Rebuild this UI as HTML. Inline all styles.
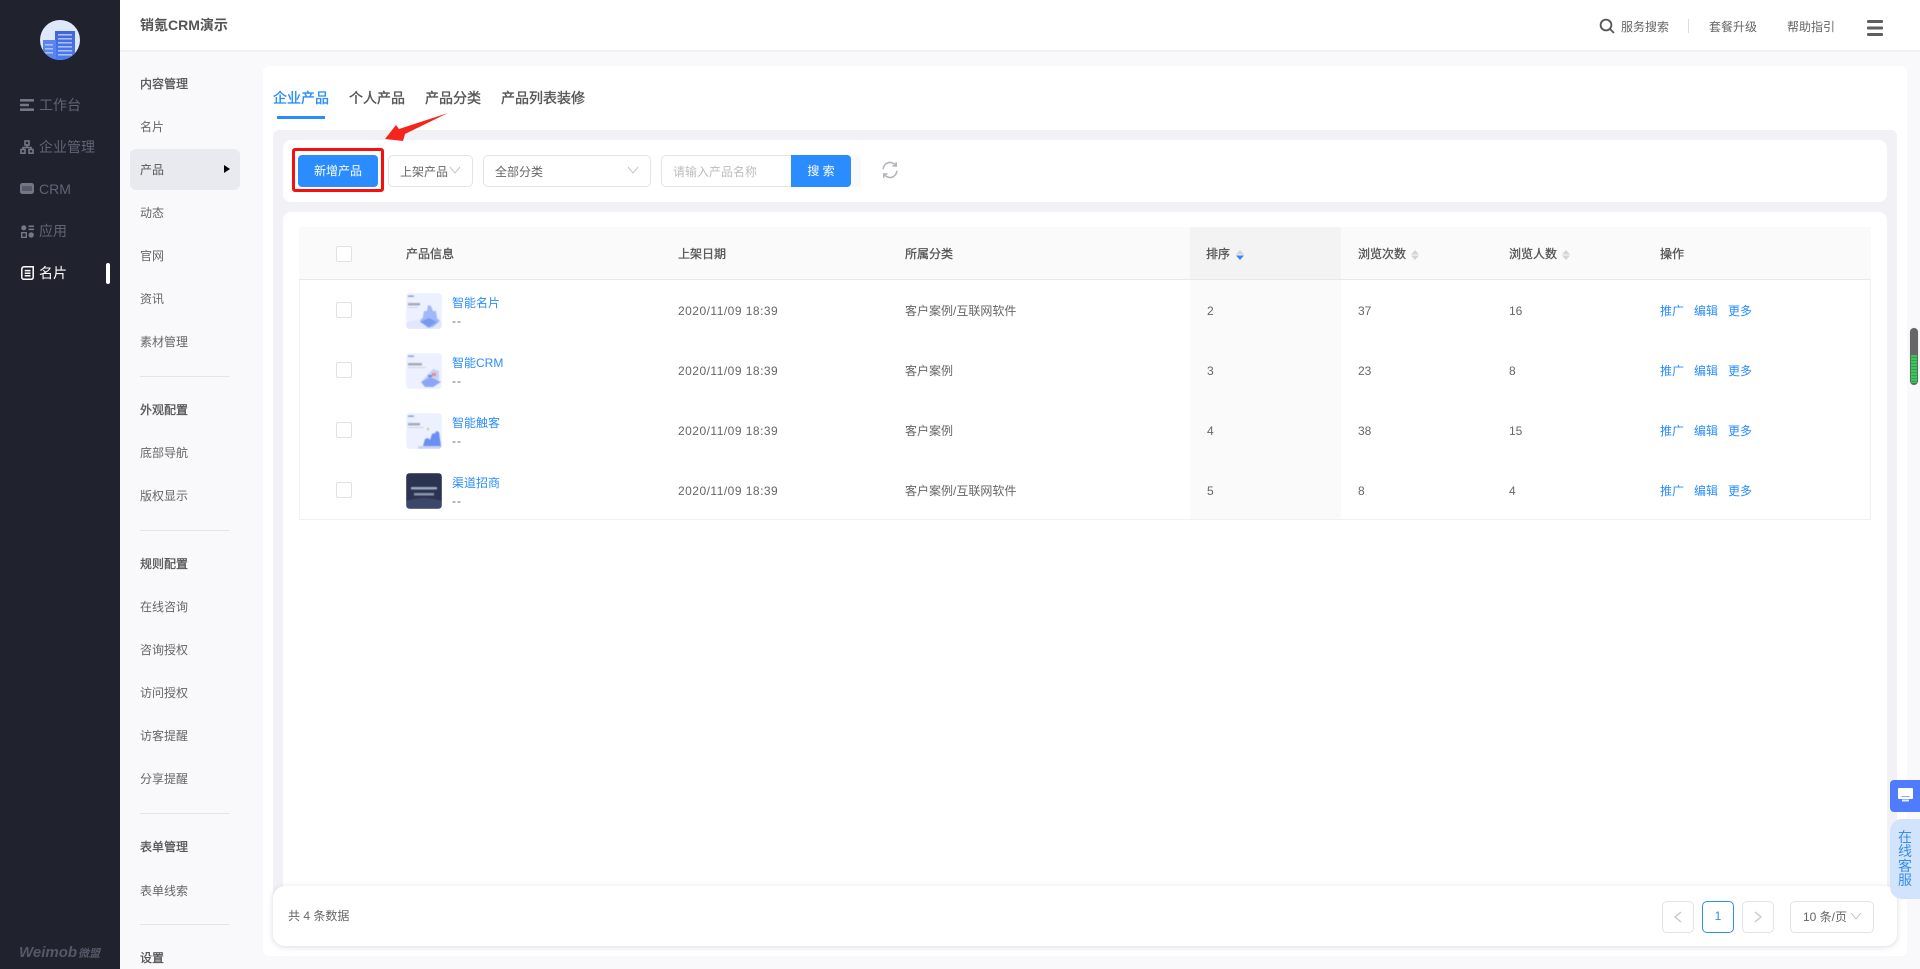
<!DOCTYPE html>
<html lang="zh"><head><meta charset="utf-8"><title>销氪CRM演示</title>
<style>
html,body{margin:0;padding:0}
body{width:1920px;height:969px;overflow:hidden;position:relative;background:#f9f9fb;font-family:"Liberation Sans","Noto Sans CJK SC",sans-serif;font-size:12px;color:#666}
.a{position:absolute;box-sizing:border-box}
.t{position:absolute;white-space:nowrap;line-height:16px}
.s{color:#626476;font-size:14px;left:39px}
.m{left:140px;color:#666;margin-top:1px}
.h{left:140px;color:#555;-webkit-text-stroke:.3px #555;margin-top:1px}
.dv{position:absolute;left:140px;width:90px;height:1px;background:#e4e4e8}
.th{color:#555;-webkit-text-stroke:.3px #555}
.tab{font-size:14px;color:#555;-webkit-text-stroke:.35px #555;top:90px}
.sel{position:absolute;box-sizing:border-box;border:1px solid #e3e3e3;border-radius:5px;background:#fff;height:32px;top:155px}
.cb{position:absolute;box-sizing:border-box;left:336px;width:16px;height:16px;border:1px solid #e2e2e2;border-radius:2px;background:#fff}
.l{color:#2a8cff}
.d{letter-spacing:.48px}
.r{margin-top:1px}
.dd{letter-spacing:1px}
.thumb{filter:blur(.5px)}
</style></head><body>

<!-- sidebar -->
<div class="a" style="left:0;top:0;width:120px;height:969px;background:#20222e"></div>
<svg class="a" style="left:40px;top:20px" width="40" height="40" viewBox="0 0 40 40">
<defs><clipPath id="c"><circle cx="20" cy="20" r="20"/></clipPath><linearGradient id="g" x1="0" y1="0" x2="0" y2="1"><stop offset="0" stop-color="#3f66d8"/><stop offset="1" stop-color="#4c7cf4"/></linearGradient></defs>
<g clip-path="url(#c)"><rect width="40" height="40" fill="#dfe7fb"/>
<rect x="15" y="11" width="20" height="30" fill="url(#g)"/><rect x="3" y="20" width="13" height="21" fill="#5b85ee"/>
<g fill="#a9bff5"><rect x="18" y="14" width="14" height="1.6"/><rect x="18" y="18" width="14" height="1.6"/><rect x="18" y="22" width="14" height="1.6"/><rect x="18" y="26" width="14" height="1.6"/><rect x="18" y="30" width="14" height="1.6"/><rect x="18" y="34" width="14" height="1.6"/><rect x="5" y="24" width="8" height="1.6"/><rect x="5" y="28" width="8" height="1.6"/><rect x="5" y="32" width="8" height="1.6"/></g></g></svg>

<svg class="a" style="left:20px;top:99px" width="14" height="12" fill="#757786"><rect width="14" height="2.6" rx=".6"/><rect y="4.7" width="9" height="2.6" rx=".6"/><rect y="9.4" width="14" height="2.6" rx=".6"/></svg>
<span class="t s" style="top:97px">工作台</span>
<svg class="a" style="left:20px;top:140px" width="14" height="14" fill="none" stroke="#757786" stroke-width="1.6"><rect x="5" y="1" width="4" height="4"/><rect x="1" y="9.5" width="4" height="3.7"/><rect x="9" y="9.5" width="4" height="3.7"/><path d="M7 5v2.5M3 9.5V7.5h8v2"/></svg>
<span class="t s" style="top:139px">企业管理</span>
<svg class="a" style="left:20px;top:183px" width="14" height="11"><rect width="14" height="11" rx="2.5" fill="#757786"/><rect x="2" y="3" width="10" height="5" fill="#585a69"/></svg>
<span class="t s" style="top:181px">CRM</span>
<svg class="a" style="left:21px;top:225px" width="13" height="13" fill="#757786"><circle cx="2.8" cy="2.8" r="2.6"/><rect x="7.5" y=".5" width="5.5" height="1.6"/><rect x="7.5" y="3.6" width="5.5" height="1.6"/><rect x=".7" y="7.7" width="4.6" height="4.6" fill="none" stroke="#757786" stroke-width="1.4"/><circle cx="10.2" cy="10" r="2.7"/></svg>
<span class="t s" style="top:223px">应用</span>
<svg class="a" style="left:21px;top:266px" width="13" height="14" fill="none" stroke="#fff" stroke-width="1.5"><path d="M3 .8h9.2v10.5a2 2 0 0 1-2 2H2.8a2 2 0 0 1-2-2V3a2.2 2.2 0 0 1 2.2-2.2z"/><path d="M3.7 4.6h5.8M3.7 7.2h5.8M3.7 9.8h5.8"/></svg>
<span class="t s" style="top:265px;color:#fff">名片</span>
<div class="a" style="left:106px;top:263px;width:4px;height:21px;background:#fff;border-radius:2px"></div>
<span class="t" style="left:19px;top:945px;font-size:15px;font-weight:700;font-style:italic;color:#565868">Weimob</span>
<span class="t" style="left:78px;top:946px;font-size:11px;font-weight:700;font-style:italic;color:#565868">微盟</span>

<!-- header -->
<div class="a" style="left:120px;top:0;width:1800px;height:50px;background:#fff;box-shadow:0 2px 0 #f1f1f4"></div>
<span class="t" style="left:140px;top:17px;font-size:14px;font-weight:700;color:#555">销氪CRM演示</span>
<svg class="a" style="left:1599px;top:18px" width="16" height="16" fill="none" stroke="#555" stroke-width="1.8"><circle cx="7" cy="7" r="5.4"/><path d="M11 11l4 4"/></svg>
<span class="t r" style="left:1621px;top:18px">服务搜索</span>
<div class="a" style="left:1688px;top:19px;width:1px;height:14px;background:#ddd"></div>
<span class="t r" style="left:1709px;top:18px">套餐升级</span>
<span class="t r" style="left:1787px;top:18px">帮助指引</span>
<svg class="a" style="left:1867px;top:20px" width="16" height="16" fill="#5f5f5f"><rect width="16" height="3" rx="1"/><rect y="6.5" width="16" height="3" rx="1"/><rect y="13" width="16" height="3" rx="1"/></svg>

<!-- secondary menu -->
<span class="t h" style="top:75px">内容管理</span>
<span class="t m" style="top:118px">名片</span>
<div class="a" style="left:130px;top:149px;width:110px;height:41px;background:#e9eaef;border-radius:6px"></div>
<span class="t m" style="top:161px;color:#555">产品</span>
<div class="a" style="left:224px;top:165px;width:0;height:0;border-left:6px solid #000;border-top:4px solid transparent;border-bottom:4px solid transparent"></div>
<span class="t m" style="top:204px">动态</span>
<span class="t m" style="top:247px">官网</span>
<span class="t m" style="top:290px">资讯</span>
<span class="t m" style="top:333px">素材管理</span>
<div class="dv" style="top:376px"></div>
<span class="t h" style="top:401px">外观配置</span>
<span class="t m" style="top:444px">底部导航</span>
<span class="t m" style="top:487px">版权显示</span>
<div class="dv" style="top:530px"></div>
<span class="t h" style="top:555px">规则配置</span>
<span class="t m" style="top:598px">在线咨询</span>
<span class="t m" style="top:641px">咨询授权</span>
<span class="t m" style="top:684px">访问授权</span>
<span class="t m" style="top:727px">访客提醒</span>
<span class="t m" style="top:770px">分享提醒</span>
<div class="dv" style="top:813px"></div>
<span class="t h" style="top:838px">表单管理</span>
<span class="t m" style="top:882px">表单线索</span>
<div class="dv" style="top:924px"></div>
<span class="t h" style="top:949px">设置</span>

<!-- content card -->
<div class="a" style="left:263px;top:66px;width:1644px;height:890px;background:#fff;border-radius:6px"></div>
<span class="t tab" style="left:273px;color:#2a8cff;-webkit-text-stroke:.35px #2a8cff">企业产品</span>
<span class="t tab" style="left:349px">个人产品</span>
<span class="t tab" style="left:425px">产品分类</span>
<span class="t tab" style="left:501px">产品列表装修</span>
<div class="a" style="left:277px;top:116px;width:48px;height:3px;background:#2a8cff"></div>

<div class="a" style="left:273px;top:130px;width:1624px;height:790px;background:#f1f1f6;border-radius:6px"></div>
<div class="a" style="left:283px;top:140px;width:1604px;height:62px;background:#fff;border-radius:8px"></div>
<div class="a" style="left:283px;top:212px;width:1604px;height:700px;background:#fff;border-radius:8px 8px 0 0"></div>

<!-- filter -->
<div class="a" style="left:292px;top:148px;width:92px;height:44px;border:3px solid #f60f0f;border-radius:3px"></div>
<div class="a" style="left:298px;top:155px;width:80px;height:32px;background:#2a8cff;border-radius:4px;color:#fff;text-align:center;line-height:33px">新增产品</div>
<div class="sel" style="left:388px;width:85px"></div>
<span class="t r" style="left:400px;top:163px;color:#666">上架产品</span>
<svg class="a" style="left:449px;top:166px" width="12" height="8" fill="none" stroke="#c4c4c4"><path d="M1 1l5 6 5-6"/></svg>
<div class="sel" style="left:483px;width:168px"></div>
<span class="t r" style="left:495px;top:163px;color:#666">全部分类</span>
<svg class="a" style="left:627px;top:166px" width="12" height="8" fill="none" stroke="#c4c4c4"><path d="M1 1l5 6 5-6"/></svg>
<div class="a" style="left:851px;top:155px;width:10px;height:32px;background:#f9f9f9;border-radius:0 5px 5px 0"></div>
<div class="sel" style="left:661px;width:132px;border-radius:5px 0 0 5px"></div>
<span class="t r" style="left:673px;top:163px;color:#bdbdbd">请输入产品名称</span>
<div class="a" style="left:791px;top:155px;width:60px;height:32px;background:#2a8cff;border-radius:0 4px 4px 0;color:#fff;text-align:center;line-height:32px">搜 索</div>
<svg class="a" style="left:881px;top:161px" width="18" height="18" fill="none" stroke="#b4b4b8" stroke-width="1.6"><path d="M2.2 8.2A6.8 6.8 0 0 1 14.6 4.4M15.8 9.8A6.8 6.8 0 0 1 3.4 13.6"/><path d="M15.2 1.2v3.8h-3.8M2.8 16.8v-3.8h3.8"/></svg>

<!-- arrow -->
<svg class="a" style="left:380px;top:108px" width="72" height="38"><polygon points="5,31 16,17 19,21 68,5 25,26 23,33" fill="#f4261b"/></svg>

<!-- table -->
<div class="a" style="left:299px;top:227px;width:1572px;height:293px;border:1px solid #f1f1f1"></div>
<div class="a" style="left:299px;top:227px;width:1572px;height:53px;background:#fafafa;border-bottom:1px solid #e8e8e8"></div>
<div class="a" style="left:1190px;top:227px;width:151px;height:52px;background:#f3f3f3"></div>
<div class="a" style="left:1190px;top:280px;width:151px;height:239px;background:#fafafa"></div>
<div class="cb" style="top:246px"></div>
<span class="t th" style="left:406px;top:246px">产品信息</span>
<span class="t th" style="left:678px;top:246px">上架日期</span>
<span class="t th" style="left:905px;top:246px">所属分类</span>
<span class="t th" style="left:1206px;top:246px">排序</span>
<span class="t th" style="left:1358px;top:246px">浏览次数</span>
<span class="t th" style="left:1509px;top:246px">浏览人数</span>
<span class="t th" style="left:1660px;top:246px">操作</span>
<svg class="a" style="left:1235px;top:249px" width="10" height="12"><path d="M5 1l4 4.5H1z" fill="#d4d4d4"/><path d="M5 11L1 6.5h8z" fill="#2a8cff"/></svg>
<svg class="a" style="left:1410px;top:249px" width="10" height="12" fill="#d4d4d4"><path d="M5 1l4 4.5H1zM5 11L1 6.5h8z"/></svg>
<svg class="a" style="left:1561px;top:249px" width="10" height="12" fill="#d4d4d4"><path d="M5 1l4 4.5H1zM5 11L1 6.5h8z"/></svg>

<!-- rows -->
<div class="cb" style="top:302px"></div><div class="cb" style="top:362px"></div><div class="cb" style="top:422px"></div><div class="cb" style="top:482px"></div>

<div class="a" style="left:406px;top:293px;width:36px;height:36px;border-radius:4px;overflow:hidden"><svg class="thumb" width="36" height="36" style="display:block"><rect width="36" height="36" fill="#edf1ff"/><rect x="2" y="2.5" width="6" height="1.4" fill="#7d97f0"/><rect x="2" y="10" width="12" height="2.5" fill="#a5a9b8"/><rect x="2" y="14" width="10" height="1" fill="#cfd4e6"/><path d="M0 30q18-8 36 0v6H0z" fill="#e0e7fe"/><path d="M14 28l3-4 1-6h3l1-6 3 1 2 5h3l1 7 3 3-7 6-5 1z" fill="#a2b8f8"/><path d="M14 29l9 5 8-5-8-4z" fill="#7998f2"/></svg></div>
<div class="a" style="left:406px;top:353px;width:36px;height:36px;border-radius:4px;overflow:hidden"><svg class="thumb" width="36" height="36" style="display:block"><rect width="36" height="36" fill="#edf1ff"/><rect x="2" y="2.5" width="6" height="1.4" fill="#7d97f0"/><rect x="2" y="10" width="14" height="2.5" fill="#a5a9b8"/><rect x="2" y="14" width="18" height="1" fill="#cfd4e6"/><path d="M16 28l11-12 6 2v9z" fill="#c3d1fb"/><path d="M15 29l9-5 11 5-8 5H19z" fill="#8ca6f4"/><rect x="26" y="20" width="4" height="3" fill="#f08a70"/><rect x="22" y="22" width="4" height="2" fill="#6a8bef"/></svg></div>
<div class="a" style="left:406px;top:413px;width:36px;height:36px;border-radius:4px;overflow:hidden"><svg class="thumb" width="36" height="36" style="display:block"><rect width="36" height="36" fill="#edf1ff"/><rect x="2" y="2.5" width="6" height="1.4" fill="#7d97f0"/><rect x="2" y="10" width="12" height="2.5" fill="#a5a9b8"/><rect x="2" y="14" width="16" height="1" fill="#cfd4e6"/><path d="M17 33l2-7 3-1 2 2 2-6 2-1 1 1 1-3 3 1 2 14z" fill="#6a8ef2"/><circle cx="22" cy="16" r="1.3" fill="#b5dc7c"/><path d="M12 33h24v3H12z" fill="#c6d3fb"/></svg></div>
<div class="a" style="left:406px;top:473px;width:36px;height:36px;border-radius:4px;overflow:hidden"><svg class="thumb" width="36" height="36" style="display:block"><rect width="36" height="36" fill="#2a3350"/><path d="M0 28q18-6 36 0v8H0z" fill="#3d4769"/><rect x="5" y="14" width="26" height="2.5" fill="#a2a8bc"/><rect x="8" y="20" width="20" height="2.5" fill="#8f95ab"/></svg></div>

<span class="t l" style="left:452px;top:295px">智能名片</span><span class="t dd" style="left:452px;top:313px">--</span>
<span class="t l" style="left:452px;top:355px">智能CRM</span><span class="t dd" style="left:452px;top:373px">--</span>
<span class="t l" style="left:452px;top:415px">智能触客</span><span class="t dd" style="left:452px;top:433px">--</span>
<span class="t l" style="left:452px;top:475px">渠道招商</span><span class="t dd" style="left:452px;top:493px">--</span>

<span class="t d r" style="left:678px;top:302px">2020/11/09 18:39</span>
<span class="t d r" style="left:678px;top:362px">2020/11/09 18:39</span>
<span class="t d r" style="left:678px;top:422px">2020/11/09 18:39</span>
<span class="t d r" style="left:678px;top:482px">2020/11/09 18:39</span>
<span class="t r" style="left:905px;top:302px">客户案例/互联网软件</span>
<span class="t r" style="left:905px;top:362px">客户案例</span>
<span class="t r" style="left:905px;top:422px">客户案例</span>
<span class="t r" style="left:905px;top:482px">客户案例/互联网软件</span>
<span class="t r" style="left:1207px;top:302px">2</span><span class="t r" style="left:1358px;top:302px">37</span><span class="t r" style="left:1509px;top:302px">16</span>
<span class="t r" style="left:1207px;top:362px">3</span><span class="t r" style="left:1358px;top:362px">23</span><span class="t r" style="left:1509px;top:362px">8</span>
<span class="t r" style="left:1207px;top:422px">4</span><span class="t r" style="left:1358px;top:422px">38</span><span class="t r" style="left:1509px;top:422px">15</span>
<span class="t r" style="left:1207px;top:482px">5</span><span class="t r" style="left:1358px;top:482px">8</span><span class="t r" style="left:1509px;top:482px">4</span>
<span class="t l r" style="left:1660px;top:302px">推广</span><span class="t l r" style="left:1694px;top:302px">编辑</span><span class="t l r" style="left:1728px;top:302px">更多</span>
<span class="t l r" style="left:1660px;top:362px">推广</span><span class="t l r" style="left:1694px;top:362px">编辑</span><span class="t l r" style="left:1728px;top:362px">更多</span>
<span class="t l r" style="left:1660px;top:422px">推广</span><span class="t l r" style="left:1694px;top:422px">编辑</span><span class="t l r" style="left:1728px;top:422px">更多</span>
<span class="t l r" style="left:1660px;top:482px">推广</span><span class="t l r" style="left:1694px;top:482px">编辑</span><span class="t l r" style="left:1728px;top:482px">更多</span>

<!-- footer -->
<div class="a" style="left:273px;top:886px;width:1624px;height:60px;background:#fff;border-radius:12px;box-shadow:0 1px 6px rgba(90,90,120,.22)"></div>
<span class="t" style="left:288px;top:908px">共 4 条数据</span>
<div class="a" style="left:1662px;top:901px;width:32px;height:32px;border:1px solid #e3e3e3;border-radius:5px"></div>
<svg class="a" style="left:1674px;top:911px" width="8" height="12" fill="none" stroke="#c4c4c4" stroke-width="1.2"><path d="M7 1L1 6l6 5"/></svg>
<div class="a" style="left:1702px;top:901px;width:32px;height:32px;border:1px solid #2a8cff;border-radius:5px;color:#2a8cff;text-align:center;line-height:29px">1</div>
<div class="a" style="left:1742px;top:901px;width:32px;height:32px;border:1px solid #e3e3e3;border-radius:5px"></div>
<svg class="a" style="left:1754px;top:911px" width="8" height="12" fill="none" stroke="#c4c4c4" stroke-width="1.2"><path d="M1 1l6 5-6 5"/></svg>
<div class="a" style="left:1790px;top:901px;width:84px;height:32px;border:1px solid #e3e3e3;border-radius:5px"></div>
<span class="t" style="left:1803px;top:909px">10 条/页</span>
<svg class="a" style="left:1850px;top:912px" width="12" height="8" fill="none" stroke="#c4c4c4"><path d="M1 1l5 6 5-6"/></svg>

<!-- floating -->
<div class="a" style="left:1890px;top:780px;width:30px;height:32px;background:#4f7cff;border-radius:4px 0 0 4px"></div>
<svg class="a" style="left:1898px;top:788px" width="15" height="15"><rect width="15" height="11" rx="1" fill="#fff"/><rect x="3.5" y="8" width="8" height="1" fill="#8fa9ff"/><rect x="4" y="11.5" width="7" height="2" fill="#e4eaff"/></svg>
<div class="a" style="left:1890px;top:819px;width:30px;height:80px;background:#d2e4fc;border-radius:12px 0 0 12px;color:#3a8ee6;font-size:14px;line-height:14.3px;text-align:center;padding-top:11px">在<br>线<br>客<br>服</div>
<div class="a" style="left:1910px;top:328px;width:8px;height:57px;background:#666;border-radius:4px;box-shadow:0 0 1px #ccc"></div>
<div class="a" style="left:1911px;top:355px;width:6px;height:28px;background:repeating-linear-gradient(#2ecc55 0 2px,#3f9a55 2px 3px)"></div>
</body></html>
